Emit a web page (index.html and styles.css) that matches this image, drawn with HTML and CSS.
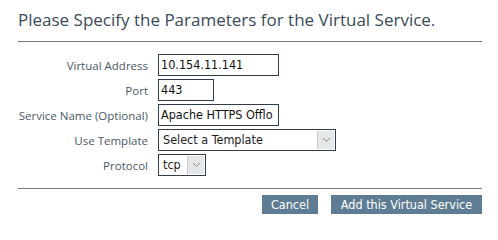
FILE: index.html
```html
<!DOCTYPE html>
<html>
<head>
<meta charset="utf-8">
<link rel="stylesheet" href="styles.css">
</head>
<body>
<div class="panel">
  <h1 class="title">Please Specify the Parameters for the Virtual Service.</h1>
  <div class="form">
    <label class="lbl">Virtual Address</label>
    <div class="field"><span class="input w120">10.154.11.141</span></div>
    <label class="lbl">Port</label>
    <div class="field"><span class="input w55">443</span></div>
    <label class="lbl">Service Name (Optional)</label>
    <div class="field"><span class="input w120">Apache HTTPS Offlo</span></div>
    <label class="lbl">Use Template</label>
    <div class="field"><span class="select w177"><span class="sel-text">Select a Template</span><span class="arrow"><svg width="9" height="6" viewBox="0 0 9 6"><path d="M1 1 L4.5 4.5 L8 1" fill="none" stroke="#8a8a8a" stroke-width="1"/></svg></span></span></div>
    <label class="lbl">Protocol</label>
    <div class="field"><span class="select w47"><span class="sel-text">tcp</span><span class="arrow"><svg width="9" height="6" viewBox="0 0 9 6"><path d="M1 1 L4.5 4.5 L8 1" fill="none" stroke="#8a8a8a" stroke-width="1"/></svg></span></span></div>
  </div>
  <div class="actions">
    <button class="btn btn-cancel">Cancel</button>
    <button class="btn btn-add">Add this Virtual Service</button>
  </div>
</div>
</body>
</html>
```

FILE: styles.css
```css
html, body {
  margin: 0;
  padding: 0;
  background: #ffffff;
}
.panel {
  padding: 8px 16px 0 18px;
  width: 464px;
  font-family: "DejaVu Sans", "Liberation Sans", sans-serif;
}
.title {
  margin: 0;
  font-family: "Open Sans", "DejaVu Sans", sans-serif;
  font-weight: normal;
  font-size: 17px;
  line-height: 23px;
  color: #3a4a58;
  padding-bottom: 10px;
  border-bottom: 1px solid #6c7d8b;
}
.form {
  display: grid;
  grid-template-columns: 130px auto;
  column-gap: 10px;
  row-gap: 3px;
  margin-top: 12px;
  align-items: center;
}
.lbl {
  text-align: right;
  font-family: "Open Sans", "DejaVu Sans", sans-serif;
  font-size: 11.5px;
  color: #4b5966;
}
.field {
  display: flex;
}
.input, .select {
  box-sizing: border-box;
  height: 22px;
  border: 1px solid #2d3d4c;
  font-family: "DejaVu Sans Condensed", "DejaVu Sans", sans-serif;
  font-stretch: condensed;
  font-size: 12.5px;
  color: #111;
  line-height: 20px;
  padding-left: 2px;
  white-space: nowrap;
  overflow: hidden;
}
.w120 { width: 121px; }
.w55 { width: 56px; }
.w177 { width: 178px; }
.w47 { width: 48px; }
.select {
  display: flex;
  justify-content: space-between;
  padding-left: 4px;
  padding-right: 1px;
  color: #222;
}
.sel-text { align-self: center; }
.arrow {
  width: 16px;
  height: 18px;
  margin-top: 1px;
  background: #e6e6e6;
  border-left: 1px solid #c8c8c8;
  display: flex;
  align-items: center;
  justify-content: center;
}
.actions {
  margin-top: 12px;
  border-top: 1px solid #6c7d8b;
  padding-top: 6px;
  display: flex;
  justify-content: flex-end;
  gap: 13px;
}
.btn {
  height: 19px;
  border: none;
  background: #5e7c93;
  color: #ffffff;
  font-family: "DejaVu Sans Condensed", "DejaVu Sans", sans-serif;
  font-stretch: condensed;
  font-size: 12.5px;
  margin: 0;
}
.btn-cancel { width: 56px; padding: 0; }
.btn-add { width: 151px; padding: 0; }
```
